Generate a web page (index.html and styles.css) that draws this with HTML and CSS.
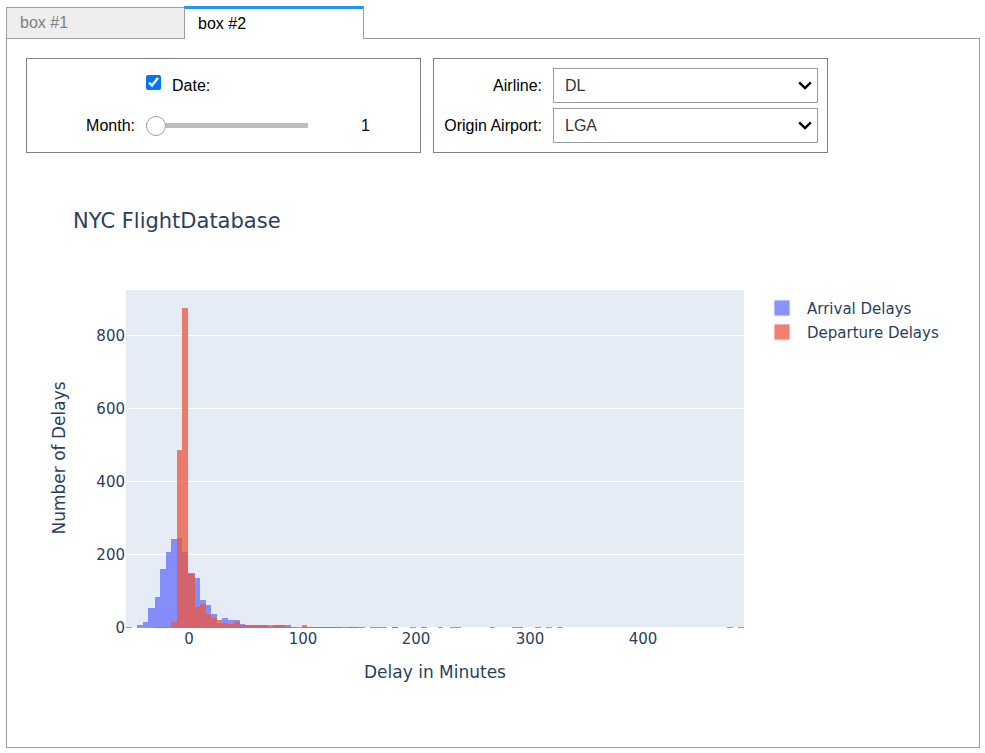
FILE: index.html
```
<!DOCTYPE html>
<html lang="en">
<head>
<meta charset="utf-8">
<title>NYC FlightDatabase</title>
<link rel="stylesheet" href="styles.css">
</head>
<body>
<div class="tabs" role="tablist">
  <button class="tab" type="button" role="tab" aria-selected="false">box #1</button>
  <button class="tab tab-current" type="button" role="tab" aria-selected="true">box #2</button>
</div>
<main class="panel" role="tabpanel">
  <form class="filters">
    <div class="box">
      <div class="row date-row">
        <input class="check" type="checkbox" id="date" checked>
        <label for="date">Date:</label>
      </div>
      <div class="row">
        <label class="caption" for="month">Month:</label>
        <div class="slider-line">
          <input class="slider" type="range" id="month" min="1" max="12" value="1">
          <output class="readout" for="month">1</output>
        </div>
      </div>
    </div>
    <div class="box">
      <div class="row">
        <label class="caption" for="airline">Airline:</label>
        <div class="select-wrap">
          <select class="select" id="airline"><option>DL</option></select>
          <svg class="chevron" viewBox="0 0 14 9" aria-hidden="true"><path d="M1.2 1.3 7 7l5.8-5.7"/></svg>
        </div>
      </div>
      <div class="row">
        <label class="caption" for="origin">Origin Airport:</label>
        <div class="select-wrap">
          <select class="select" id="origin"><option>LGA</option></select>
          <svg class="chevron" viewBox="0 0 14 9" aria-hidden="true"><path d="M1.2 1.3 7 7l5.8-5.7"/></svg>
        </div>
      </div>
    </div>
  </form>
  <svg class="chart" viewBox="26 165 934 560" role="img" aria-label="NYC FlightDatabase">
    <text class="title" x="73" y="228">NYC FlightDatabase</text>
    <rect class="plot" x="126" y="290" width="618" height="337"/>
    <path class="grid" d="M126 335.5H744M126 408.5H744M126 481.5H744M126 554.5H744"/>
    <path class="arrival" d="M126 628V627H132V628ZM137 628V625H143V622H148V608H155V597H160V569H166V552H171V539H177V538H182V552H188V573H195V578H200V600H206V605H211V614H217V623H222V618H228V620H240V624H245V625H268V627H273V625H291V627H296V628ZM302 628V627H342V628ZM347 628V627H358V628ZM370 628V627H381V628ZM392 628V627H398V628ZM421 628V627H427V628ZM455 628V627H461V628ZM512 628V627H523V628ZM535 628V627H541V628ZM738 628V627H744V628Z"/>
    <path class="departure" d="M155 628V627H171V622H177V450H182V308H188V574H195V607H200V604H206V614H211V618H217V620H222V623H228V624H234V622H240V625H285V627H302V625H307V627H365V628ZM381 628V627H387V628ZM392 628V627H398V628ZM410 628V627H416V628ZM438 628V627H443V628ZM450 628V627H455V628ZM490 628V627H495V628ZM546 628V627H552V628ZM557 628V627H563V628ZM727 628V627H733V628Z"/>
    <g class="tick tick-y">
      <text x="125" y="341">800</text>
      <text x="125" y="414">600</text>
      <text x="125" y="487">400</text>
      <text x="125" y="560">200</text>
      <text x="125" y="633">0</text>
    </g>
    <g class="tick tick-x">
      <text x="189" y="644">0</text>
      <text x="303" y="644">100</text>
      <text x="416" y="644">200</text>
      <text x="530" y="644">300</text>
      <text x="643" y="644">400</text>
    </g>
    <text class="axis" x="435" y="678">Delay in Minutes</text>
    <text class="axis" transform="translate(65 458) rotate(-90)">Number of Delays</text>
    <rect class="arrival key" x="774" y="300" width="16" height="16"/>
    <text class="legend" x="807" y="314">Arrival Delays</text>
    <rect class="departure key" x="774" y="324" width="16" height="16"/>
    <text class="legend" x="807" y="338">Departure Delays</text>
  </svg>
</main>
</body>
</html>
```
FILE: styles.css
```
* {
  box-sizing: border-box;
}

body {
  display: flex;
  flex-direction: column;
  min-height: 100vh;
  margin: 0;
  padding: 6px 5px 5px 6px;
  background: #fff;
  color: #000;
  font: 16px/20px "Liberation Sans", Arial, sans-serif;
}

.tabs {
  display: flex;
  align-items: flex-end;
  position: relative;
  z-index: 1;
}

.tab {
  width: 180px;
  height: 32px;
  margin: 0 -2px 0 0;
  padding: 0 13px;
  border: 1px solid #9e9e9e;
  background: #eee;
  color: #808080;
  font: inherit;
  text-align: left;
}

.tab-current {
  height: 33px;
  border-top: 3px solid #2196f3;
  border-bottom: 0;
  background: #fff;
  color: #000;
}

.panel {
  flex: 1;
  margin-top: -1px;
  padding: 19px;
  border: 1px solid #9e9e9e;
}

.filters {
  display: flex;
  gap: 12px;
}

.box {
  display: flex;
  flex-direction: column;
  flex: 1;
  gap: 5px;
  max-width: 395px;
  padding: 9px;
  border: 1px solid #808080;
}

.row {
  display: grid;
  grid-template-columns: 99px 1fr;
  gap: 11px;
  align-items: center;
  height: 35px;
}

.caption {
  text-align: right;
  white-space: nowrap;
}

.date-row {
  display: flex;
  gap: 11px;
  padding-left: 110px;
}

.check {
  width: 15px;
  height: 15px;
  margin: 0 0 6px;
  accent-color: #0075ff;
}

.slider-line {
  display: flex;
  align-items: center;
}

.slider {
  appearance: none;
  width: 162px;
  height: 20px;
  margin: 0;
  background: linear-gradient(#bdbdbd, #bdbdbd) center / 100% 5px no-repeat;
}

.slider::-webkit-slider-thumb {
  appearance: none;
  width: 20px;
  height: 20px;
  border: 1px solid #9e9e9e;
  border-radius: 50%;
  background: #fff;
}

.readout {
  flex: 1;
  padding-left: 12px;
  text-align: center;
}

.select-wrap {
  position: relative;
}

.select {
  display: block;
  appearance: none;
  width: 100%;
  height: 35px;
  padding: 0 28px 0 11px;
  border: 1px solid #9e9e9e;
  border-radius: 0;
  background: #fff;
  color: #333;
  font: inherit;
}

.chevron {
  position: absolute;
  top: 13px;
  right: 6px;
  width: 14px;
  height: 9px;
  fill: none;
  stroke: #000;
  stroke-width: 2.4;
  pointer-events: none;
}

.chart {
  display: block;
  width: 100%;
  margin-top: 12px;
  fill: #2a3f5f;
  font-family: "DejaVu Sans", Verdana, sans-serif;
}

.title {
  font-size: 21px;
}

.plot {
  fill: #e5ecf6;
}

.grid {
  stroke: #fff;
}

.arrival {
  fill: #636efa;
  opacity: 0.75;
}

.departure {
  fill: #ef553b;
  opacity: 0.75;
}

.key {
  stroke: #e5ecf6;
  stroke-width: 1;
}

.tick,
.legend {
  font-size: 15px;
}

.tick-y {
  text-anchor: end;
}

.tick-x,
.axis {
  text-anchor: middle;
}

.axis {
  font-size: 17px;
}
```
